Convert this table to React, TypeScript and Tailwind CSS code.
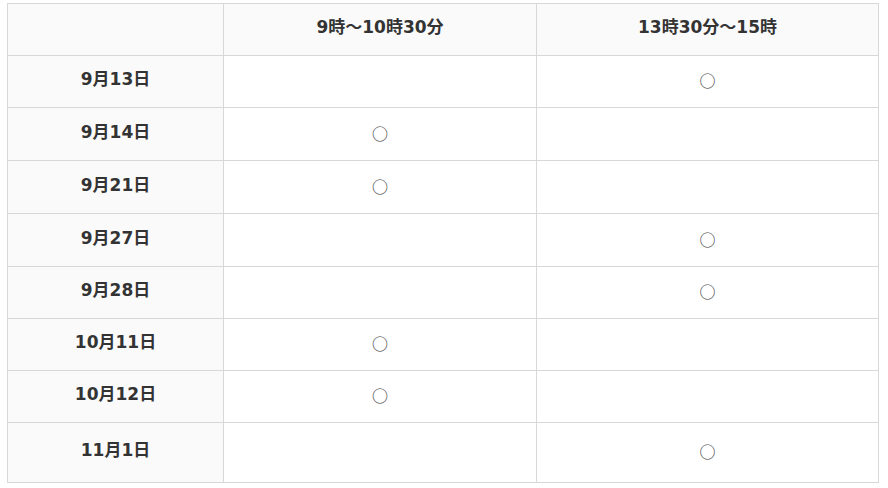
import React from 'react';

const rows = [
  { date: '9月13日', am: false, pm: true, h: 'h-[52px]' },
  { date: '9月14日', am: true, pm: false, h: 'h-[53px]' },
  { date: '9月21日', am: true, pm: false, h: 'h-[53px]' },
  { date: '9月27日', am: false, pm: true, h: 'h-[53px]' },
  { date: '9月28日', am: false, pm: true, h: 'h-[52px]' },
  { date: '10月11日', am: true, pm: false, h: 'h-[52px]' },
  { date: '10月12日', am: true, pm: false, h: 'h-[52px]' },
  { date: '11月1日', am: false, pm: true, h: 'h-[60px]' },
];

const cell = 'flex items-center justify-center pb-[3px] border-r border-b border-[#d8d8d8]';

const Mark = () => (
  <span className="font-['Noto_Sans_CJK_JP',sans-serif] text-[16px] text-[#333]">○</span>
);

const App: React.FC = () => {
  return (
    <div className="w-[888px] h-[488px] bg-white pt-[3px] pl-[7px] font-['DejaVu_Sans','Noto_Sans_CJK_JP',sans-serif] text-[#333] text-[17px]">
      <div className="grid grid-cols-[216px_313px_342px] w-[872px] border-l border-t border-[#d8d8d8]">
        {/* header */}
        <div className={`${cell} h-[52px] bg-[#fafafa]`}></div>
        <div className={`${cell} h-[52px] bg-[#fafafa] font-bold`}>9時〜10時30分</div>
        <div className={`${cell} h-[52px] bg-[#fafafa] font-bold`}>13時30分〜15時</div>

        {rows.map((row) => (
          <React.Fragment key={row.date}>
            <div className={`${cell} ${row.h} bg-[#fafafa] font-bold`}>{row.date}</div>
            <div className={`${cell} ${row.h} bg-white`}>{row.am ? <Mark /> : null}</div>
            <div className={`${cell} ${row.h} bg-white`}>{row.pm ? <Mark /> : null}</div>
          </React.Fragment>
        ))}
      </div>
    </div>
  );
};

export default App;
